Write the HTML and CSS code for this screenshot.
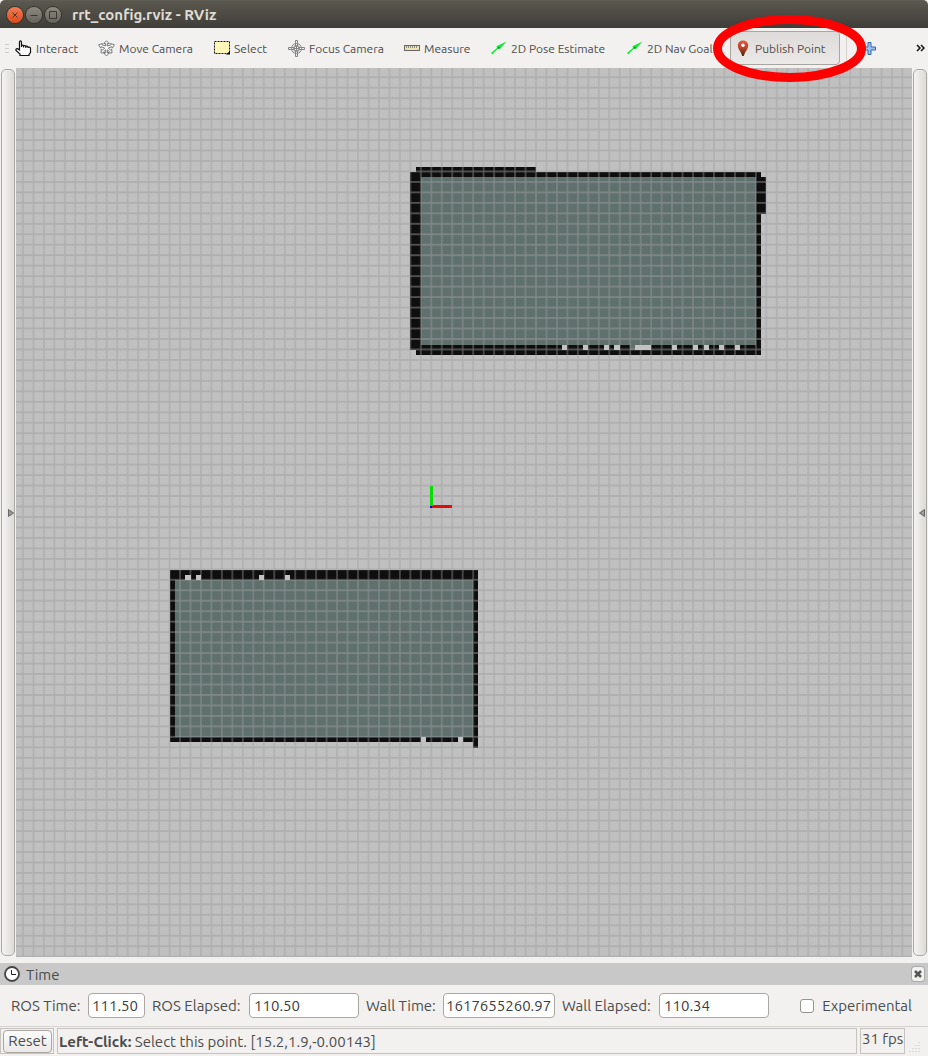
FILE: index.html
```html
<!DOCTYPE html>
<html lang="en">
<head>
<meta charset="utf-8">
<title>rrt_config.rviz - RViz</title>
<link rel="stylesheet" href="styles.css">
</head>
<body>
<div class="window">
  <header class="titlebar">
    <div class="window-buttons">
      <button class="win-btn win-close" aria-label="Close"><svg viewBox="0 0 16 16"><path d="M5.500 5.500l5 5m0-5l-5 5"/></svg></button>
      <button class="win-btn" aria-label="Minimize"><svg viewBox="0 0 16 16"><path d="M4.500 8.500h7"/></svg></button>
      <button class="win-btn" aria-label="Maximize"><svg viewBox="0 0 16 16"><path d="M4.500 4.500h7v7h-7z"/></svg></button>
    </div>
    <h1 class="title">rrt_config.rviz - RViz</h1>
  </header>

  <nav class="toolbar" aria-label="Tools">
    <span class="handle"></span>
    <button class="tool tool-interact">
      <svg class="icon" viewBox="0 0 17 17"><path d="M4.500 10V2.500Q4.500 .8 5.500 .8T6.500 2.500V7V5.500Q7.500 4.800 8.500 5.500V7.500V6Q9.800 5.200 10.800 6V8V6.500Q12 5.800 13 6.800V8V7.500Q15.500 6.500 15.500 8.500V12.500L14 14.500V15.500H5V14L1 10.500Q.5 8.500 2.500 8.700z" fill="#fff" stroke="#111" stroke-width="1.200"/></svg>
      Interact
    </button>
    <button class="tool tool-move">
      <svg class="icon" viewBox="0 0 17 17"><g fill="#fff" stroke="#6c6c6c" stroke-width=".9" stroke-linejoin="round"><path d="M8.500 .8l2.700 2.700H9.300V6L13 4.800 12.600 3.500l3.800 1.300-2.200 3.400-.5-1.500L10.300 8l2.200 2.300 1.200-1 .3 3.700-3.700-.3 1.100-1L9.300 9.800v3.200h1.900l-2.700 3-2.700-3h1.900V9.800l-2.100 1.900 1.100 1-3.700.3.300-3.700 1.200 1L6.700 8 3.300 6.700l-.5 1.500L.6 4.800l3.800-1.300L4 4.800 7.700 6V3.500H5.800z"/></g></svg>
      Move Camera
    </button>
    <button class="tool tool-select">
      <svg class="icon" viewBox="0 0 17 17"><rect x="1.500" y="1.500" width="15" height="12" fill="#fff6b8" stroke="#111" stroke-dasharray="2 1"/><path d="M13 14.500h4V11z" fill="#000"/></svg>
      Select
    </button>
    <button class="tool tool-focus">
      <svg class="icon" viewBox="0 0 17 17"><g fill="none" stroke="#858585"><path d="M7.500 .5h2v6h-2zM7.500 10.500h2v6h-2zM.5 7.500h6v2h-6zM10.500 7.500h6v2h-6z" fill="#eee"/><circle cx="8.500" cy="8.500" r="5"/><circle cx="8.500" cy="8.500" r="3"/><path d="M7 8.500h3M8.500 7v3"/></g></svg>
      Focus Camera
    </button>
    <button class="tool tool-measure">
      <svg class="icon" viewBox="0 0 17 17"><rect x="1.500" y="5.500" width="15" height="5" fill="#eee3b0" stroke="#666"/><path d="M3.500 6v2M5.500 6v2M7.500 6v2M9.500 6v2M11.500 6v2M13.500 6v2" stroke="#777" stroke-width=".8"/></svg>
      Measure
    </button>
    <button class="tool tool-pose">
      <svg class="icon" viewBox="0 0 17 17"><path d="M1 13L7 8l-.5-1.800L16.500 1.500 10 9l-2-.2L2.200 14.500z" fill="#0bf032"/><path d="M8.500 6.500l1.500 1.500-2.500 .8z" fill="#087d22"/></svg>
      2D Pose Estimate
    </button>
    <button class="tool tool-goal">
      <svg class="icon" viewBox="0 0 17 17"><path d="M1 13L7 8l-.5-1.800L16.500 1.500 10 9l-2-.2L2.200 14.500z" fill="#0bf032"/><path d="M8.500 6.500l1.500 1.500-2.500 .8z" fill="#087d22"/></svg>
      2D Nav Goal
    </button>
    <div class="publish">
      <button class="tool-active" aria-pressed="true">
        <svg class="pin" viewBox="0 0 12 17"><defs><linearGradient id="pin" x2="0" y2="1"><stop offset="0" stop-color="#e3593c"/><stop offset=".45" stop-color="#bd432b"/><stop offset="1" stop-color="#4d2a0c"/></linearGradient></defs><path d="M6 .5C2.500 .5 .8 3 .8 5.500 .8 9 4 11.500 5.200 16h1.600C8 11.500 11.200 9 11.200 5.500 11.200 3 9.500 .5 6 .5z" fill="url(#pin)"/><circle cx="6" cy="5.300" r="1.700" fill="#fff"/></svg>
        Publish Point
      </button>
      <svg class="highlight" viewBox="0 0 153 67"><ellipse cx="76.500" cy="33.500" rx="72" ry="29"/></svg>
    </div>
    <span class="divider"></span>
    <button class="add" aria-label="Add tool"><svg viewBox="0 0 13 13"><path d="M5 .5h3V5h4.500v3H8v4.500H5V8H.5V5H5z" fill="#9bc2ea" stroke="#3566a8"/></svg></button>
    <button class="more" aria-label="More tools"><svg viewBox="0 0 9 8"><path d="M1 1l3 3-3 3M5 1l3 3-3 3"/></svg></button>
  </nav>

  <main class="workspace">
    <button class="side side-left" aria-label="Show left panels"><svg viewBox="0 0 6 8"><path d="M.5 .5L5.500 4 .5 7.500z"/></svg></button>
    <div class="view">
      <svg class="scene" viewBox="0 0 896 889" preserveAspectRatio="xMidYMid slice" role="img" aria-label="Occupancy map">
        <defs>
          <pattern id="grid" x="415.300" y="438.500" width="10.470" height="10.470" patternUnits="userSpaceOnUse">
            <path d="M0 0H10.470M0 10.470H10.470M0 0V10.470M10.470 0V10.470" fill="none" stroke="#9c9ca0" stroke-opacity=".6" stroke-width="1.200"/>
          </pattern>
        </defs>
        <rect width="896" height="889" fill="#c0c0c0"/>
        <g fill="#5f706d">
          <rect x="405" y="109" width="335" height="173"/>
          <rect x="159" y="512" width="298" height="157"/>
        </g>
        <g fill="#0e0e0e">
          <path d="M400 99H520V104H745V109H750V146H745V287H400V282H394V104H400zM405 109V277H740V109z" fill-rule="evenodd"/>
          <path d="M154 502H462V680H457V674H154zM159 512V669H457V512z" fill-rule="evenodd"/>
        </g>
        <rect x="614" y="277" width="5" height="5" fill="#5f706d"/>
        <rect width="896" height="889" fill="url(#grid)"/>
        <path fill="#c3c3c3" d="M546 277h5v5h-5zM567 277h5v5h-5zM588 277h5v5h-5zM598 277h6v5h-6zM619 277h16v5h-16zM656 277h5v5h-5zM677 277h5v5h-5zM688 277h5v5h-5zM703 277h5v5h-5zM719 277h5v5h-5zM169 507h6v5h-6zM180 507h5v5h-5zM243 507h5v5h-5zM269 507h5v5h-5zM405 669h5v5h-5zM442 669h5v5h-5z"/>
        <rect x="415" y="437" width="21" height="3" fill="#e00b0b"/>
        <rect x="414" y="418" width="3" height="20" fill="#08dc08"/>
        <rect x="414" y="438" width="2" height="2" fill="#00f"/>
      </svg>
    </div>
    <button class="side" aria-label="Show right panels"><svg viewBox="0 0 6 8"><path d="M5.500 .5L.5 4l5 3.500z"/></svg></button>
  </main>

  <section class="dock">
    <div class="dock-title">
      <svg class="clock" viewBox="0 0 16 16"><circle cx="8" cy="8" r="7" fill="#fff" stroke="#444" stroke-width="1.800"/><path d="M7.500 4v4.500H12" fill="none" stroke="#222"/></svg>
      <h2>Time</h2>
      <button class="dock-close" aria-label="Close Time panel"><svg viewBox="0 0 8 8"><path d="M1 1l6 6M7 1L1 7"/></svg></button>
    </div>
    <form class="times">
      <label class="short" for="ros-time">ROS Time:</label>
      <input class="narrow" id="ros-time" type="text" value="111.50" readonly>
      <label class="long" for="ros-elapsed">ROS Elapsed:</label>
      <input id="ros-elapsed" type="text" value="110.50" readonly>
      <label class="short" for="wall-time">Wall Time:</label>
      <input class="full" id="wall-time" type="text" value="1617655260.97" readonly>
      <label class="long" for="wall-elapsed">Wall Elapsed:</label>
      <input id="wall-elapsed" type="text" value="110.34" readonly>
      <label class="check"><input type="checkbox">Experimental</label>
    </form>
  </section>

  <footer class="status">
    <div class="cell reset-cell"><button class="reset">Reset</button></div>
    <p class="cell message"><b>Left-Click:</b> Select this point. [15.2,1.9,-0.00143]</p>
    <p class="cell fps">31 fps</p>
    <svg class="grip" viewBox="0 0 12 12"><path d="M11 0v12M8 3v9M5 6v6M2 9v3" stroke="#c5c2be" stroke-dasharray="1 2"/></svg>
  </footer>
</div>
</body>
</html>
```
FILE: styles.css
```css
* { box-sizing: border-box; }
body {
  margin: 0;
  background: #f2f1f0;
  color: #4c4c4c;
  font-family: Ubuntu, "Open Sans", "Noto Sans", sans-serif;
  font-size: 15px;
}
button, input { font: inherit; color: inherit; }
button { padding: 0; border: 0; background: none; }
h1, h2, p { margin: 0; }
svg { display: block; flex: none; }

.window { display: flex; flex-direction: column; min-height: 100vh; }

.titlebar {
  display: flex;
  align-items: center;
  gap: 11px;
  height: 28px;
  padding: 1px 7px 0;
  background: linear-gradient(#5b584f, #3f3d38);
  border-top: 1px solid #5f5c54;
  border-radius: 5px 5px 0 0;
}
.window-buttons { display: flex; gap: 3px; }
.win-btn {
  width: 16px;
  height: 16px;
  border-radius: 50%;
  background: linear-gradient(#8c8980, #66635b);
  box-shadow: 0 0 0 1px #35332e;
}
.win-btn svg { width: 16px; height: 16px; fill: none; stroke: #3a3833; stroke-width: 1; }
.win-close { background: linear-gradient(#f47c54, #df4a1b); }
.title { color: #dfdbd2; font-size: 15px; line-height: 20px; }

.toolbar { display: flex; align-items: center; height: 40px; padding-left: 5px; }
.handle {
  width: 4px;
  height: 9px;
  margin-right: 6px;
  background: repeating-linear-gradient(#cfccc9 0 1px, transparent 1px 4px);
}
.tool {
  display: flex;
  align-items: center;
  flex: none;
  gap: 4px;
  height: 34px;
  font-size: 12px;
  white-space: nowrap;
}
.icon { width: 17px; height: 17px; }
.tool-interact { width: 83px; }
.tool-move { width: 115px; }
.tool-select { width: 75px; }
.tool-focus { width: 115px; }
.tool-measure { width: 87px; }
.tool-pose { width: 136px; }
.tool-goal { width: 104px; }
.publish { position: relative; flex: none; }
.tool-active {
  display: flex;
  align-items: center;
  gap: 6px;
  width: 110px;
  height: 34px;
  padding-left: 6px;
  border: 1px solid #a9a6a2;
  border-radius: 4px;
  background: linear-gradient(#dedcda, #ebe9e7);
  font-size: 12px;
  white-space: nowrap;
}
.pin { width: 12px; height: 17px; }
.highlight {
  position: absolute;
  z-index: 2;
  top: -16px;
  left: -17px;
  width: 153px;
  height: 67px;
  fill: none;
  stroke: #f00;
  stroke-width: 9px;
  pointer-events: none;
}
.divider { width: 1px; height: 24px; margin: 0 16px 0 6px; background: #d5d2cf; }
.add svg { width: 13px; height: 13px; }
.more { margin-left: auto; padding-right: 3px; }
.more svg { width: 9px; height: 8px; fill: none; stroke: #111; stroke-width: 1.5; }

.workspace { display: flex; flex: 1; }
.side {
  display: grid;
  place-items: center end;
  flex: none;
  width: 14px;
  margin: 1px;
  padding-right: 1px;
  border: 1px solid #aaa7a3;
  border-radius: 5px;
  background: linear-gradient(90deg, #f4f3f2, #dddbd8);
}
.side svg { width: 6px; height: 8px; fill: #999; stroke: #666; stroke-width: 1; }
.side-left { padding-right: 0; }
.view { position: relative; flex: 1; overflow: hidden; background: #c0c0c0; }
.scene { position: absolute; inset: 0; width: 100%; height: 100%; }

.dock { margin-top: 6px; }
.dock-title {
  display: flex;
  align-items: center;
  gap: 6px;
  height: 22px;
  padding: 0 4px;
  background: #c8c8c8;
}
.clock { width: 16px; height: 16px; }
.dock-title h2 { font-size: 15px; font-weight: 400; }
.dock-close {
  display: grid;
  place-items: center;
  width: 12px;
  height: 14px;
  margin-left: auto;
  border-radius: 3px;
  background: #f3f2f1;
  box-shadow: 0 0 0 1px #aaa;
}
.dock-close svg { width: 8px; height: 8px; stroke: #555; stroke-width: 2.5; }
.times {
  display: flex;
  align-items: center;
  gap: 7px;
  height: 41px;
  padding: 0 16px 0 11px;
  white-space: nowrap;
}
.short { flex: none; width: 70px; }
.long { flex: none; width: 90px; }
.times input[type="text"] {
  flex: none;
  width: 110px;
  height: 25px;
  padding: 0 4px;
  border: 1px solid #aaa6a1;
  border-radius: 4px;
  background: #fff;
  color: #3c3c3c;
}
.times .narrow[type="text"] { width: 57px; padding: 0 3px; }
.times .full[type="text"] { width: 112px; padding: 0 2px; }
.check { display: flex; align-items: center; gap: 8px; margin-left: auto; }
.check input {
  appearance: none;
  width: 14px;
  height: 14px;
  margin: 0;
  border: 1px solid #96928e;
  border-radius: 3px;
  background: #fff;
}

.status {
  display: flex;
  gap: 3px;
  height: 30px;
  padding: 1px 8px 2px 0;
  border-top: 1px solid #d6d4d1;
}
.cell { border: 1px solid #c6c3c0; line-height: 26px; white-space: nowrap; }
.reset-cell { display: flex; align-items: center; padding: 0 1px 0 2px; }
.reset {
  width: 49px;
  height: 23px;
  border: 1px solid #aaa6a1;
  border-radius: 4px;
  background: linear-gradient(#fcfcfc, #ebe9e8);
  line-height: 20px;
}
.message { flex: 1; padding-left: 1px; }
.fps { width: 45px; padding-left: 1px; line-height: 19px; }
.grip { align-self: flex-end; width: 12px; height: 12px; }
```
